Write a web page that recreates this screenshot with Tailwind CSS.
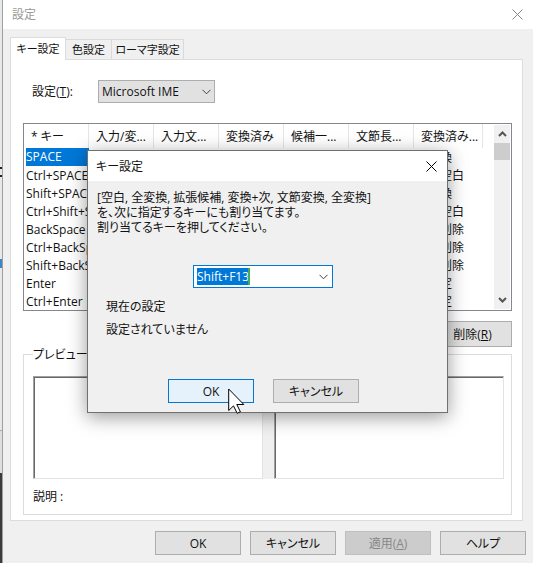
<!DOCTYPE html>
<html lang="ja">
<head>
    <meta charset="UTF-8">
    <meta name="viewport" content="width=device-width, initial-scale=1.0">
    <script src="https://cdn.jsdelivr.net/npm/@tailwindcss/browser@4"></script>
    <title>設定</title>
</head>
<body class="relative flex min-h-screen overflow-hidden bg-[#f0f0f0] font-['Open_Sans','Noto_Sans_CJK_JP',sans-serif] text-[12px] leading-[15px] text-[#111] [font-feature-settings:'palt']">
    <!-- edge of the window behind -->
    <div class="flex w-[3px] shrink-0 flex-col border-r border-[#a0a0a0] bg-[#e8e8e8]">
        <div class="mt-[167px] h-[10px] border-y-2 border-[#222]"></div>
        <div class="mt-[82px] h-[9px] bg-[#3f87c4]"></div>
        <div class="mt-[162px] h-[43px] border-t border-[#aaa] bg-[#dedede]"></div>
        <div class="flex-1 bg-[#3c3c3c]"></div>
    </div>

    <div class="flex min-w-0 flex-1 flex-col">
        <header class="flex h-[29px] items-center justify-between bg-white pr-[10px] pl-[9px] text-[#999]">
            <h1>設定</h1>
            <button type="button" aria-label="閉じる">
                <svg class="size-[11px]" viewBox="0 0 11 11" fill="none" stroke="#888"><path d="M.5.5l10 10M10.5.5l-10 10"/></svg>
            </button>
        </header>

        <div class="flex flex-1 flex-col pt-2 pr-[10px] pl-[7px]">
            <nav class="relative z-10 flex items-end text-[11px]">
                <button type="button" class="-mb-px h-[23px] w-[56px] border border-b-0 border-[#dcdcdc] bg-white pb-[2px]">キー設定</button>
                <button type="button" class="h-[20px] w-[46px] border border-b-0 border-l-0 border-[#d9d9d9]">色設定</button>
                <button type="button" class="h-[20px] w-[72px] border border-b-0 border-l-0 border-[#d9d9d9]">ローマ字設定</button>
            </nav>

            <main class="border border-[#dcdcdc] bg-white pt-[20px] pr-[10px] pb-[5px] pl-3">
                <div class="flex items-center pl-[9px]">
                    <label for="keymap" class="w-[66px]">設定(<u>T</u>):</label>
                    <div class="relative">
                        <select id="keymap" class="h-[23px] w-[117px] appearance-none border border-[#adadad] bg-[#e1e1e1] pb-px pl-[3px]">
                            <option>Microsoft IME</option>
                        </select>
                        <svg class="pointer-events-none absolute top-[9px] right-[4px] h-[6px] w-[9px]" viewBox="0 0 9 6" fill="none" stroke="#444"><path d="M.5.8l4 4 4-4"/></svg>
                    </div>
                </div>

                <div class="mt-[20px] flex h-[188px] overflow-hidden border border-[#828790]">
                    <div class="min-w-0 flex-1">
                        <table class="w-[459px] table-fixed border-separate border-spacing-0 whitespace-nowrap">
                            <thead>
                                <tr class="h-[24px] text-left [&>th]:border-r [&>th]:border-[#e5e5e5] [&>th]:pl-[7px] [&>th]:font-normal">
                                    <th class="w-[65px]">* キー</th>
                                    <th class="w-[65px]">入力/変...</th>
                                    <th class="w-[65px]">入力文...</th>
                                    <th class="w-[65px]">変換済み</th>
                                    <th class="w-[65px]">候補一...</th>
                                    <th class="w-[65px]">文節長...</th>
                                    <th>変換済み...</th>
                                </tr>
                            </thead>
                            <tbody class="[&_td]:h-[18px] [&_td]:pl-[2px]">
                                <tr><td><span class="block bg-[#0078d7] leading-[18px] text-white">SPACE</span></td><td colspan="5"></td><td>全変換</td></tr>
                                <tr><td>Ctrl+SPACE</td><td colspan="5"></td><td>半角空白</td></tr>
                                <tr><td>Shift+SPACE</td><td colspan="5"></td><td>全変換</td></tr>
                                <tr><td>Ctrl+Shift+S</td><td colspan="5"></td><td>半角空白</td></tr>
                                <tr><td>BackSpace</td><td colspan="5"></td><td>文字削除</td></tr>
                                <tr><td>Ctrl+BackSp</td><td colspan="5"></td><td>文字削除</td></tr>
                                <tr><td>Shift+BackS</td><td colspan="5"></td><td>文字削除</td></tr>
                                <tr><td>Enter</td><td colspan="5"></td><td>全確定</td></tr>
                                <tr><td>Ctrl+Enter</td><td colspan="5"></td><td>全確定</td></tr>
                            </tbody>
                        </table>
                    </div>
                    <div class="my-px mr-px flex w-[16px] flex-col items-center bg-[#f0f0f0]">
                        <svg class="my-[6px] h-[6px] w-[9px] shrink-0" viewBox="0 0 9 6" fill="none" stroke="#555" stroke-width="2"><path d="M1 5l3.500-3.500L8 5"/></svg>
                        <div class="h-[17px] w-full bg-[#cdcdcd]"></div>
                        <svg class="mt-auto mb-[6px] h-[6px] w-[9px] shrink-0" viewBox="0 0 9 6" fill="none" stroke="#555" stroke-width="2"><path d="M1 1l3.500 3.500L8 1"/></svg>
                    </div>
                </div>

                <div class="mt-[10px] flex justify-end">
                    <button type="button" class="h-[26px] w-[79px] border border-[#adadad] bg-[#e1e1e1]">削除(<u>R</u>)</button>
                </div>

                <fieldset class="border border-[#dcdcdc] pr-[7px] pb-[10px] pl-[9px]">
                    <legend>プレビュー</legend>
                    <div class="mt-[14px] flex h-[103px]">
                        <div class="flex-1 border border-t-[#a0a0a0] border-r-[#e3e3e3] border-b-[#e3e3e3] border-l-[#a0a0a0] shadow-[inset_1px_1px_0_#696969]"></div>
                        <div class="w-[11px] bg-[#f0f0f0]"></div>
                        <div class="flex-1 border border-t-[#a0a0a0] border-r-[#e3e3e3] border-b-[#e3e3e3] border-l-[#a0a0a0] shadow-[inset_1px_1px_0_#696969]"></div>
                    </div>
                    <p class="mt-[10px]">説明 :</p>
                </fieldset>
            </main>

            <footer class="-mr-[3px] flex justify-end gap-[9px] pt-[10px] pb-2">
                <button type="button" class="h-[24px] w-[86px] border border-[#adadad] bg-[#e1e1e1]">OK</button>
                <button type="button" class="h-[24px] w-[86px] border border-[#adadad] bg-[#e1e1e1]">キャンセル</button>
                <button type="button" disabled class="h-[24px] w-[86px] border border-[#bfbfbf] bg-[#cccccc] text-[#888]">適用(<u>A</u>)</button>
                <button type="button" class="h-[24px] w-[86px] border border-[#adadad] bg-[#e1e1e1]">ヘルプ</button>
            </footer>
        </div>
    </div>

    <!-- key assignment dialog -->
    <div role="dialog" aria-labelledby="dialog-title" class="absolute top-[150px] left-[87px] z-20 w-[361px] border border-[#707070] bg-[#f0f0f0] shadow-[0_4px_18px_rgba(0,0,0,0.4)]">
        <div class="flex h-[30px] items-center justify-between bg-white pr-[10px] pl-2">
            <h2 id="dialog-title">キー設定</h2>
            <button type="button" aria-label="閉じる">
                <svg class="size-[11px]" viewBox="0 0 11 11" fill="none" stroke="#000"><path d="M.5.5l10 10M10.5.5l-10 10"/></svg>
            </button>
        </div>
        <div class="px-[9px] pt-[9px] pb-[9px]">
            <p>[空白, 全変換, 拡張候補, 変換+次, 文節変換, 全変換]</p>
            <p>を、次に指定するキーにも割り当てます。</p>
            <p>割り当てるキーを押してください。</p>
            <div class="mt-[30px] ml-[96px] flex h-[23px] w-[140px] items-center border border-[#0078d7] bg-white pr-[4px] pl-[3px]">
                <input type="text" aria-label="キー" value="Shift+F13" class="h-[17px] w-[53px] border-r-2 border-[#3fae5a] bg-[#0078d7] text-white outline-none">
                <button type="button" aria-label="一覧" class="ml-auto">
                    <svg class="h-[6px] w-[9px]" viewBox="0 0 9 6" fill="none" stroke="#444"><path d="M.5.8l4 4 4-4"/></svg>
                </button>
            </div>
            <div class="mt-[11px] flex flex-col gap-2 pl-[9px]">
                <p>現在の設定</p>
                <p>設定されていません</p>
            </div>
            <div class="mt-[42px] flex gap-[19px] pl-[71px]">
                <button type="button" class="relative h-[24px] w-[86px] border border-[#0078d7] bg-[#e5f1fb]">OK
                    <svg class="absolute top-[8px] left-[59px] h-[26px] w-[17px]" viewBox="0 0 17 26" fill="#fff" stroke="#000"><path d="M.7 1v21.500l4.800-4.600 3.700 7.400 3.200-1.500-3.600-7.300h7z"/></svg>
                </button>
                <button type="button" class="h-[24px] w-[86px] border border-[#adadad] bg-[#e1e1e1]">キャンセル</button>
            </div>
        </div>
    </div>
</body>
</html>
